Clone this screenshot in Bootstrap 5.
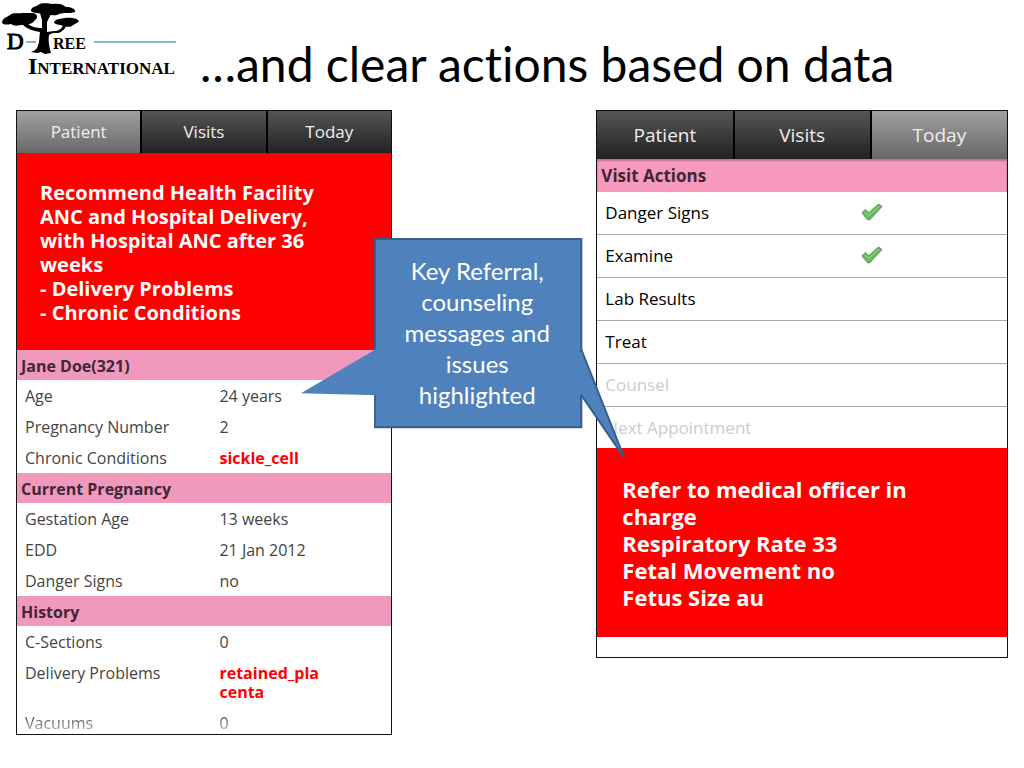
<!DOCTYPE html>
<html lang="en">
<head>
<meta charset="utf-8">
<meta name="viewport" content="width=device-width, initial-scale=1">
<title>D-Tree International: clear actions based on data</title>
<link href="https://cdn.jsdelivr.net/npm/bootstrap@5.3.0/dist/css/bootstrap.min.css" rel="stylesheet">
<style>
  body { font-family: "Open Sans", "Noto Sans", sans-serif; color: #000; background: #fff; }
  .masthead { height: 110px; }
  .brand { width: 184px; height: 84px; }
  .headline { font: 400 48px/56px Lato, sans-serif; font-variant-ligatures: none; margin: 36px 0 0 16px; }
  .stage { padding: 0 16px 32px; }
  .canvas { min-height: 624px; }
  .screen { border: 1px solid #111; background: #fff; overflow: hidden; }
  .screen-record { width: 37.9%; height: 625px; }
  .screen-today { width: 41.5%; }
  .tabs { background: #000; gap: 2px; }
  .tabs .nav-link { border: 0; border-radius: 0; padding: 0; color: #eee; height: 42px; font-size: 17px; line-height: 42px;
    background: linear-gradient(#555, #222); }
  .tabs .nav-link.active { color: #eee; background: linear-gradient(#a0a0a0, #686868); }
  .screen-today .tabs .nav-link { height: 48px; font-size: 19px; line-height: 46px; }
  .alert-block { background: #f00; color: #fff; font-weight: 700; }
  .alert-record { padding: 28px 23px 25px; font-size: 20px; line-height: 24px; height: 197px; }
  .alert-today { padding: 28px 25px; font-size: 22px; line-height: 27px; height: 189px; margin-bottom: 20px; }
  .record { width: 100%; font-size: 16px; line-height: 19px; color: #444; table-layout: fixed; }
  .record th, .record td { padding: 7px 8px 5px; font-weight: 400; vertical-align: top; }
  .record .section th { background: #f099bd; color: #402636; font-weight: 700; padding: 7px 4px 4px; }
  .record .flag { color: #f00; font-weight: 700; }
  .record .fading th, .record .fading td { color: transparent; background: linear-gradient(#444 30%, #bbb 80%); background-clip: text; -webkit-background-clip: text; }
  .actions-title { background: #f799bd; color: #402636; font-size: 17px; line-height: 33px; font-weight: 700; padding: 0 4px; margin: 0; box-shadow: inset 0 2px 2px #b77590; }
  .actions .list-group-item { height: 43px; padding: 0 8px; border-color: #aaa; font-size: 17px; color: #000; }
  .actions .list-group-item:last-child { height: 41px; }
  .actions .list-group-item.waiting { color: #ccc; }
  .tick-cell { width: 35%; line-height: 0; }
  .callout-note { left: 28.7%; top: 128px; width: 32.8%; height: 222px; }
  .callout-text { margin-left: 22.5%; width: 63.5%; height: 188px; color: #fff; font: 400 24px/31px Lato, sans-serif; font-variant-ligatures: none; }
</style>
</head>
<body>
<header class="masthead d-flex align-items-start">
  <svg class="brand flex-shrink-0" viewBox="0 0 184 84" role="img" aria-label="D-Tree International">
    <path d="M26 42H36M94 42H176" stroke="#83b7c5" stroke-width="2"/>
    <path d="M2 22C3 18 7 17 10 15C14 12 18 14 22 13L33 13C38 14 38 18 35 20C32 25 27 24 24 25C18 25 15 27 11 24C7 25 2 25 2 22Z"/>
    <path d="M31 11C31 7 35 7 38 5C43 2 49 4 53 4C58 3 63 4 66 7C71 7 76 9 75 12C69 14 64 12 59 14C55 17 49 14 44 15C39 12 34 14 31 11Z"/>
    <path d="M54 22C57 18 61 19 65 18C70 17 77 18 79 21C78 23 74 24 72 26C67 28 64 26 60 25C57 24 54 24 54 22Z"/>
    <path d="M40 13L42 20 42 28C36 28 31 27 27 23L22 24C27 29 33 31 40 32C39 37 40 43 37 48C36 50 33 51 31 52L37 53 41 52 45 54 51 53C49 47 48 40 49 35C54 31 58 35 62 31C64 30 65 28 66 26L63 25C62 29 58 31 54 31L47 32 47 22 51 14Z"/>
    <g font-family="'Liberation Serif', serif" font-weight="700">
      <text x="7" y="49" font-size="23" font-weight="400" stroke="#000" stroke-width="1">D</text>
      <text x="53" y="49" font-size="16">REE</text>
      <text x="28" y="74" font-size="24">I<tspan font-size="17">NTERNATIONAL</tspan></text>
    </g>
  </svg>
  <h1 class="headline">…and clear actions based on data</h1>
</header>

<main class="stage">
  <div class="canvas position-relative d-flex justify-content-between align-items-start">
    <section class="screen screen-record" aria-label="Patient record">
      <nav class="tabs nav nav-justified flex-nowrap">
        <button type="button" class="nav-link active">Patient</button>
        <button type="button" class="nav-link">Visits</button>
        <button type="button" class="nav-link">Today</button>
      </nav>
      <div class="alert-block alert-record">Recommend Health Facility<br>ANC and Hospital Delivery,<br>with Hospital ANC after 36<br>weeks<br>- Delivery Problems<br>- Chronic Conditions</div>
      <table class="record">
        <colgroup><col style="width:52%"><col></colgroup>
        <tbody>
          <tr class="section"><th colspan="2">Jane Doe(321)</th></tr>
          <tr><th scope="row">Age</th><td>24 years</td></tr>
          <tr><th scope="row">Pregnancy Number</th><td>2</td></tr>
          <tr><th scope="row">Chronic Conditions</th><td class="flag">sickle_cell</td></tr>
        </tbody>
        <tbody>
          <tr class="section"><th colspan="2">Current Pregnancy</th></tr>
          <tr><th scope="row">Gestation Age</th><td>13 weeks</td></tr>
          <tr><th scope="row">EDD</th><td>21 Jan 2012</td></tr>
          <tr><th scope="row">Danger Signs</th><td>no</td></tr>
        </tbody>
        <tbody>
          <tr class="section"><th colspan="2">History</th></tr>
          <tr><th scope="row">C-Sections</th><td>0</td></tr>
          <tr><th scope="row">Delivery Problems</th><td class="flag">retained_pla<br>centa</td></tr>
          <tr class="fading"><th scope="row">Vacuums</th><td>0</td></tr>
        </tbody>
      </table>
    </section>

    <section class="screen screen-today" aria-label="Visit actions">
      <nav class="tabs nav nav-justified flex-nowrap">
        <button type="button" class="nav-link">Patient</button>
        <button type="button" class="nav-link">Visits</button>
        <button type="button" class="nav-link active">Today</button>
      </nav>
      <h2 class="actions-title">Visit Actions</h2>
      <ul class="actions list-group list-group-flush">
        <li class="list-group-item d-flex align-items-center justify-content-between">Danger Signs
          <span class="tick-cell"><svg width="22" height="20" viewBox="0 0 20 18" role="img" aria-label="Done"><path d="M1 9L4 6L7 9L16 1L19 3L8 15H6Z" fill="#6dbb62" stroke="#5fa35c" stroke-width="1" stroke-linejoin="round"/><path d="M3 8L7 11L16 3" fill="none" stroke="#8fd07e" stroke-width="1"/></svg></span></li>
        <li class="list-group-item d-flex align-items-center justify-content-between">Examine
          <span class="tick-cell"><svg width="22" height="20" viewBox="0 0 20 18" role="img" aria-label="Done"><path d="M1 9L4 6L7 9L16 1L19 3L8 15H6Z" fill="#6dbb62" stroke="#5fa35c" stroke-width="1" stroke-linejoin="round"/><path d="M3 8L7 11L16 3" fill="none" stroke="#8fd07e" stroke-width="1"/></svg></span></li>
        <li class="list-group-item d-flex align-items-center">Lab Results</li>
        <li class="list-group-item d-flex align-items-center">Treat</li>
        <li class="list-group-item d-flex align-items-center waiting">Counsel</li>
        <li class="list-group-item d-flex align-items-center waiting">Next Appointment</li>
      </ul>
      <div class="alert-block alert-today">Refer to medical officer in<br>charge<br>Respiratory Rate 33<br>Fetal Movement no<br>Fetus Size au</div>
    </section>

    <aside class="callout-note position-absolute">
      <svg class="position-absolute w-100 h-100" viewBox="0 0 325 223" preserveAspectRatio="none" aria-hidden="true">
        <path d="M74 1H280V190H74Z" fill="#4f81bd" stroke="#385d8a" stroke-width="2"/>
        <path d="M76 111L0 156L76 158Z" fill="#4f81bd"/>
        <path d="M280 112L323 221L280 158" fill="#4f81bd" stroke="#385d8a" stroke-width="2"/>
        <path d="M278 115V157H281V115Z" fill="#4f81bd"/>
      </svg>
      <div class="callout-text position-relative d-flex align-items-center justify-content-center text-center">Key Referral,<br>counseling<br>messages and<br>issues<br>highlighted</div>
    </aside>
  </div>
</main>
<script src="https://cdn.jsdelivr.net/npm/bootstrap@5.3.0/dist/js/bootstrap.bundle.min.js"></script>
</body>
</html>
